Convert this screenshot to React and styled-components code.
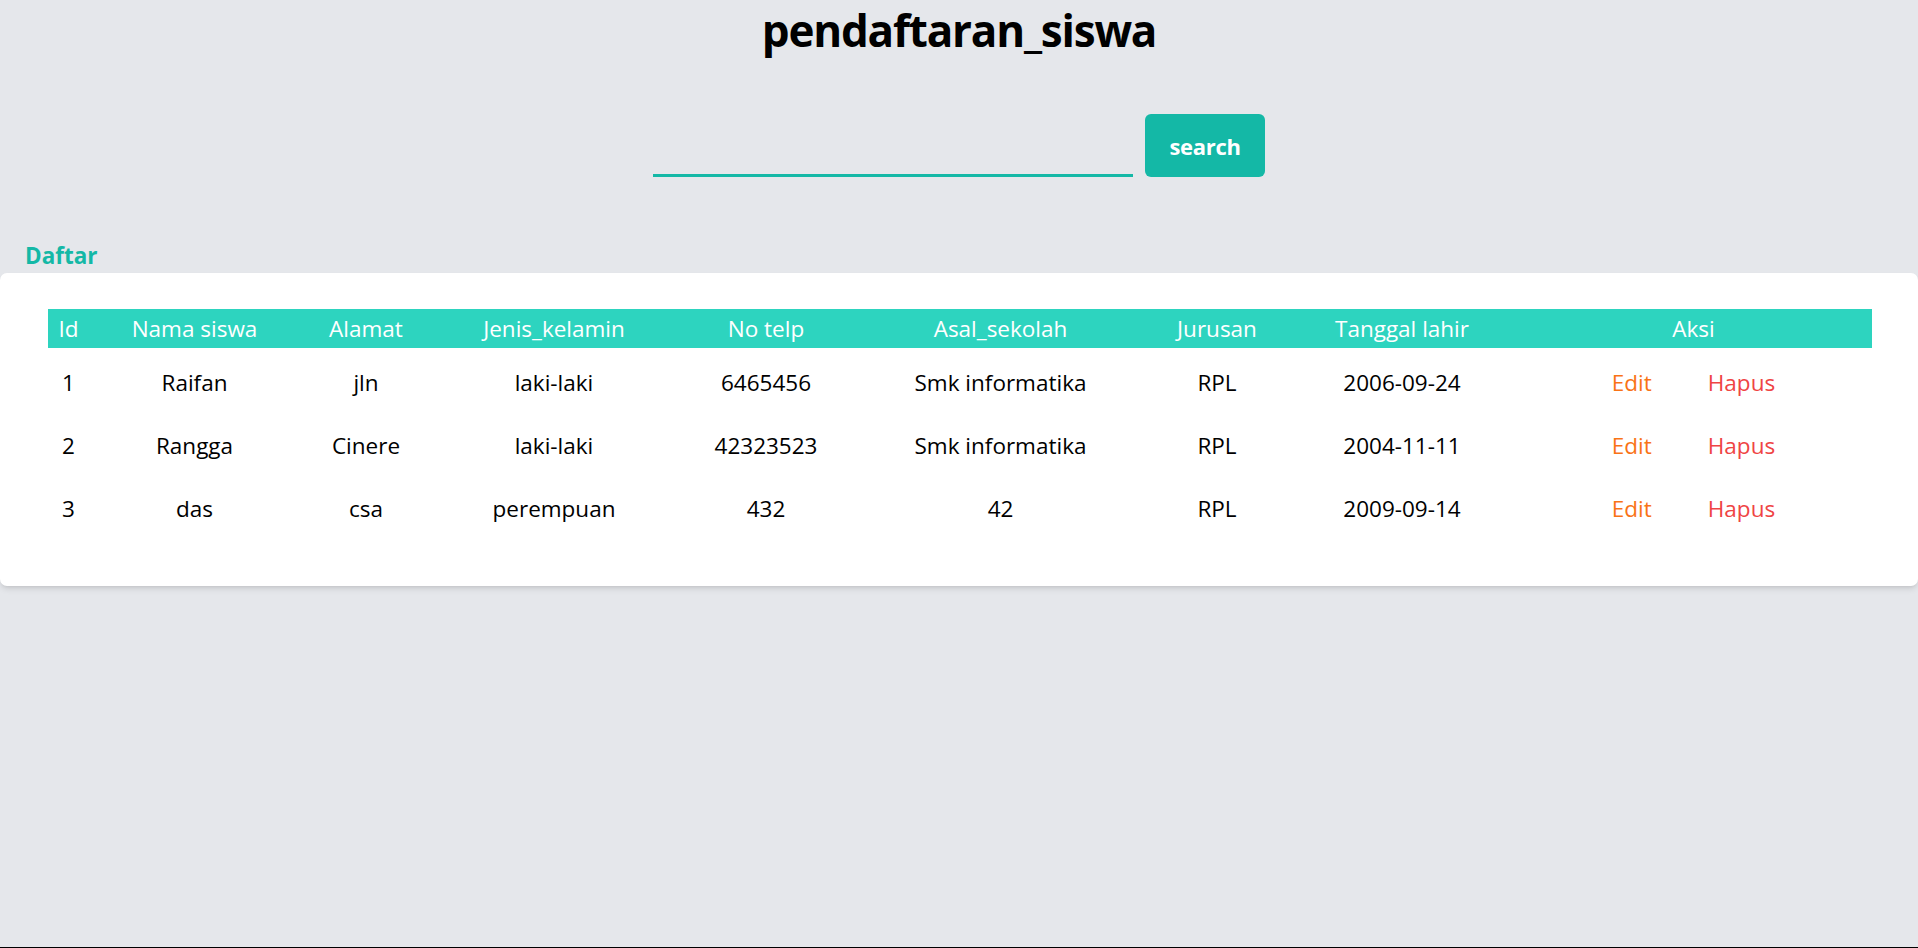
import React from "react";
import styled, { createGlobalStyle } from "styled-components";

const GlobalStyle = createGlobalStyle`
  html, body {
    margin: 0;
    padding: 0;
    background: #e5e7eb;
  }
  body {
    font-family: "Open Sans", "Noto Sans", Arial, sans-serif;
    color: #000;
  }
  * { box-sizing: border-box; }
`;

const Page = styled.div`
  min-height: 100vh;
  display: flex;
  flex-direction: column;
  border-bottom: 1px solid #000;
`;

const Title = styled.h1`
  margin: 0;
  text-align: center;
  font-size: 44px;
  font-weight: 700;
  letter-spacing: -1.2px;
  line-height: 60px;
`;

const SearchRow = styled.form`
  display: flex;
  justify-content: center;
  align-items: flex-end;
  gap: 12px;
  margin-top: 54px;
`;

const SearchInput = styled.input`
  width: 480px;
  height: 63px;
  background: transparent;
  border: none;
  border-bottom: 3px solid #14b8a6;
  outline: none;
  font-family: inherit;
  font-size: 22px;
  padding: 0 8px;
`;

const SearchButton = styled.button`
  width: 120px;
  height: 63px;
  background: #14b8a6;
  color: #fff;
  border: none;
  border-radius: 6px;
  font-family: inherit;
  font-weight: 700;
  font-size: 22px;
  letter-spacing: -0.3px;
  cursor: pointer;
`;

const SectionLink = styled.a`
  display: block;
  margin-top: 62px;
  padding-left: 25px;
  color: #14b8a6;
  font-weight: 700;
  font-size: 22.5px;
  line-height: 34px;
  text-decoration: none;
`;

const Card = styled.section`
  background: #fff;
  border-radius: 7px;
  box-shadow: 0 4px 6px -1px rgba(0, 0, 0, 0.1), 0 2px 4px -2px rgba(0, 0, 0, 0.1);
  padding: 36px 46px 46px 48px;
`;

const COLS = "41px 211px 132px 244px 180px 289px 144px 226px 1fr";

const HeadRow = styled.div`
  display: grid;
  grid-template-columns: ${COLS};
  height: 39px;
  align-items: center;
  background: #2dd4bf;
  color: #fff;
  margin-bottom: 3px;
`;

const Row = styled.div`
  display: grid;
  grid-template-columns: ${COLS};
  height: 63px;
  align-items: center;
`;

const Cell = styled.div`
  text-align: center;
  font-size: 22.5px;
  line-height: 31px;
  white-space: nowrap;
`;

const Actions = styled.div`
  display: flex;
  justify-content: center;
  gap: 56px;
  font-size: 22.5px;
  line-height: 31px;
`;

const ActionLink = styled.a`
  color: ${(p) => (p.$danger ? "#ef4444" : "#f97316")};
  text-decoration: none;
  cursor: pointer;
`;

const headers = [
  "Id",
  "Nama siswa",
  "Alamat",
  "Jenis_kelamin",
  "No telp",
  "Asal_sekolah",
  "Jurusan",
  "Tanggal lahir",
  "Aksi",
];

const rows = [
  ["1", "Raifan", "jln", "laki-laki", "6465456", "Smk informatika", "RPL", "2006-09-24"],
  ["2", "Rangga", "Cinere", "laki-laki", "42323523", "Smk informatika", "RPL", "2004-11-11"],
  ["3", "das", "csa", "perempuan", "432", "42", "RPL", "2009-09-14"],
];

export default function App() {
  return (
    <>
      <GlobalStyle />
      <Page>
        <Title>pendaftaran_siswa</Title>
        <SearchRow onSubmit={(e) => e.preventDefault()}>
          <SearchInput type="text" />
          <SearchButton type="submit">search</SearchButton>
        </SearchRow>
        <SectionLink href="#">Daftar</SectionLink>
        <Card>
          <HeadRow>
            {headers.map((h) => (
              <Cell key={h}>{h}</Cell>
            ))}
          </HeadRow>
          {rows.map((r) => (
            <Row key={r[0]}>
              {r.map((c, i) => (
                <Cell key={i}>{c}</Cell>
              ))}
              <Actions>
                <ActionLink>Edit</ActionLink>
                <ActionLink $danger>Hapus</ActionLink>
              </Actions>
            </Row>
          ))}
        </Card>
      </Page>
    </>
  );
}
